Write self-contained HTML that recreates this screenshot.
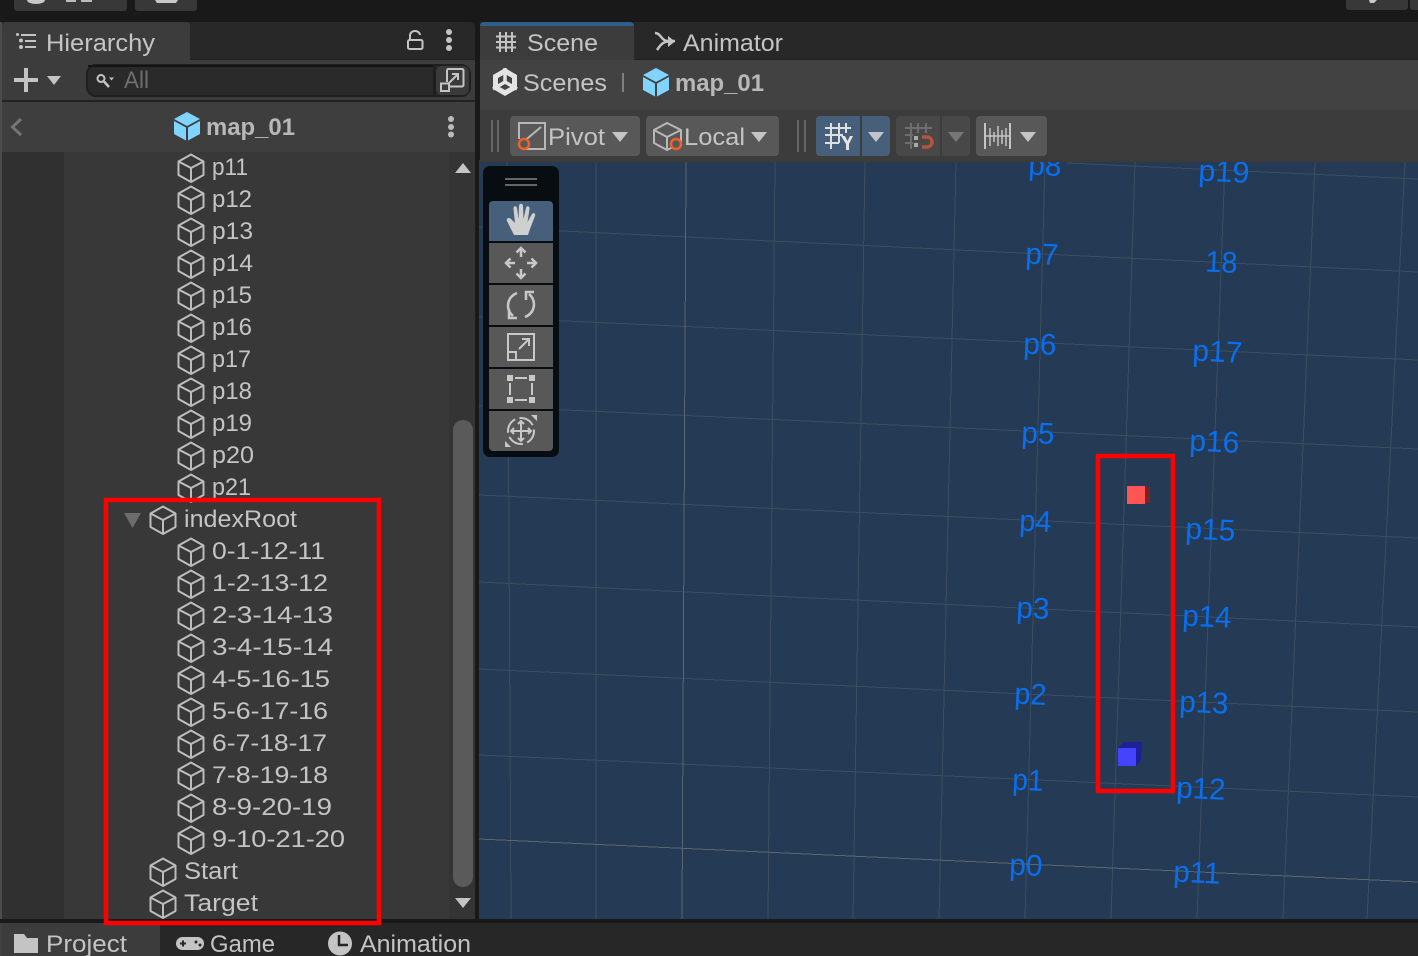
<!DOCTYPE html>
<html><head><meta charset="utf-8"><style>
html,body{margin:0;padding:0;background:#191919;width:1418px;height:956px;overflow:hidden}
svg{display:block;position:absolute;left:0;top:0}
text{font-family:"Liberation Sans",sans-serif;font-size:24.5px;fill:#c4c4c4}
.b{font-weight:bold;fill:#b8b8b8}
.l{fill:#0a6fee;font-size:30px}
.ic{fill:none;stroke:#c4c4c4;stroke-width:2}
</style></head><body>
<svg width="1418" height="956" viewBox="0 0 1418 956" xmlns="http://www.w3.org/2000/svg">
<defs>
<g id="cube" fill="none" stroke="#bdbdbd" stroke-width="2" stroke-linejoin="round">
<path d="M0-13.5 12.5-6.5V7L0 14-12.5 7V-6.5Z"/><path d="M-12.5-6.5 0 0 12.5-6.5M0 0V14"/>
</g>
<g id="bcube">
<path d="M0-14 13-7 0 0-13-7Z" fill="#80d4ff"/>
<path d="M-13-5 -1 1.500V14.500L-13 8Z" fill="#80d4ff"/><path d="M13-5 1 1.500V14.500L13 8Z" fill="#80d4ff"/>
</g>
<path id="caret" d="M-8-5H8L0 5Z"/>
</defs>

<rect width="1418" height="956" fill="#191919"/>
<!-- top bar buttons -->
<rect x="14" y="-6" width="113" height="17" rx="3" fill="#383838"/>
<rect x="135" y="-6" width="62" height="17" rx="3" fill="#383838"/>
<path d="M27 0a9 4 0 0 0 18 0Z" fill="#c8c8c8"/><rect x="66" y="0" width="10" height="2" fill="#bbb"/><rect x="81" y="0" width="11" height="2" fill="#bbb"/>
<path d="M155 0h23l-2 3h-19Z" fill="#c8c8c8"/>
<rect x="1346" y="-6" width="62" height="16" rx="3" fill="#383838"/><rect x="1410" y="-6" width="12" height="16" rx="3" fill="#383838"/>
<path d="M1369 0h8l-3 3h-4Z" fill="#c8c8c8"/>

<!-- Hierarchy panel -->
<rect x="0" y="22" width="2" height="897" fill="#4c4c4c"/>
<path d="M2 22H470a5 5 0 0 1 5 5V60H2Z" fill="#282828"/>
<path d="M2 26a4 4 0 0 1 4-4H186a4 4 0 0 1 4 4V60H2Z" fill="#3c3c3c"/>
<rect x="2" y="60" width="473" height="41" fill="#3c3c3c"/>
<rect x="190" y="59" width="285" height="1" fill="#222"/>
<rect x="2" y="100" width="473" height="2" fill="#222"/>
<rect x="2" y="102" width="473" height="50" fill="#3e3e3e"/>
<rect x="2" y="152" width="473" height="767" fill="#383838"/>
<rect x="2" y="152" width="62" height="767" fill="#303030"/>
<rect x="449" y="152" width="26" height="767" fill="#343434"/>
<rect x="453" y="420" width="20" height="467" rx="10" fill="#5a5a5a"/>
<path d="M455 173H471L463 163Z" fill="#c4c4c4"/>
<path d="M455 898H471L463 908Z" fill="#c4c4c4"/>

<!-- hierarchy tab -->
<g fill="#c4c4c4"><circle cx="17.500" cy="34.500" r="1.500"/><circle cx="21" cy="40.500" r="2"/><circle cx="21" cy="47" r="2"/>
<rect x="21" y="34" width="15" height="2"/><rect x="25" y="40" width="11" height="2"/><rect x="25" y="46" width="11" height="2"/></g>
<text x="46" y="51" textLength="109" lengthAdjust="spacingAndGlyphs">Hierarchy</text>
<path d="M410 40V36a5 4.500 0 0 1 10-1" fill="none" stroke="#c4c4c4" stroke-width="2"/>
<rect x="408" y="40" width="14.500" height="9" rx="1.500" fill="none" stroke="#c4c4c4" stroke-width="2"/>
<g fill="#c4c4c4"><circle cx="449" cy="32" r="3"/><circle cx="449" cy="40" r="3"/><circle cx="449" cy="48" r="3"/></g>

<!-- toolbar -->
<rect x="14" y="78" width="24" height="4" fill="#c4c4c4"/><rect x="24" y="68" width="4" height="24" fill="#c4c4c4"/>
<path d="M47 76H61L54 85Z" fill="#c4c4c4"/>
<rect x="87" y="65" width="383" height="31" rx="9" fill="#2a2a2a" stroke="#1f1f1f" stroke-width="2"/>
<rect x="88" y="65" width="345" height="2" fill="#141414"/>
<rect x="436" y="66" width="33" height="29" rx="6" fill="#3a3a3a"/>
<rect x="433" y="66" width="3" height="29" fill="#1f1f1f"/>
<circle cx="101" cy="78.500" r="3.500" fill="none" stroke="#c4c4c4" stroke-width="2"/><path d="M104 81.500 109 87" stroke="#c4c4c4" stroke-width="2.500"/><path d="M109 77.500h5l-2.500 3Z" fill="#c4c4c4"/>
<text x="124" y="88" textLength="25" lengthAdjust="spacingAndGlyphs" style="fill:#6e6e6e">All</text>
<path d="M447 82V70.500a1.500 1.500 0 0 1 1.500-1.500H462a1.500 1.500 0 0 1 1.500 1.500V85a1.500 1.500 0 0 1-1.500 1.500H450" class="ic"/>
<rect x="441" y="83.500" width="8" height="7.500" class="ic"/>
<path d="M449 83 458 74M452 74h6v6" class="ic"/>

<!-- header -->
<path d="M21 119 12.500 127 21 135" fill="none" stroke="#747474" stroke-width="3"/>
<use href="#bcube" x="187" y="126"/>
<text class="b" x="206" y="135" textLength="89" lengthAdjust="spacingAndGlyphs">map_01</text>
<g fill="#bbb"><circle cx="451" cy="119" r="3"/><circle cx="451" cy="127" r="3"/><circle cx="451" cy="134.500" r="3"/></g>

<!-- tree -->
<use href="#cube" x="191" y="168"/><text x="212" y="175" textLength="36" lengthAdjust="spacingAndGlyphs">p11</text>
<use href="#cube" x="191" y="200"/><text x="212" y="207" textLength="40" lengthAdjust="spacingAndGlyphs">p12</text>
<use href="#cube" x="191" y="232"/><text x="212" y="239" textLength="41" lengthAdjust="spacingAndGlyphs">p13</text>
<use href="#cube" x="191" y="264"/><text x="212" y="271" textLength="41" lengthAdjust="spacingAndGlyphs">p14</text>
<use href="#cube" x="191" y="296"/><text x="212" y="303" textLength="40" lengthAdjust="spacingAndGlyphs">p15</text>
<use href="#cube" x="191" y="328"/><text x="212" y="335" textLength="40" lengthAdjust="spacingAndGlyphs">p16</text>
<use href="#cube" x="191" y="360"/><text x="212" y="367" textLength="39" lengthAdjust="spacingAndGlyphs">p17</text>
<use href="#cube" x="191" y="392"/><text x="212" y="399" textLength="40" lengthAdjust="spacingAndGlyphs">p18</text>
<use href="#cube" x="191" y="424"/><text x="212" y="431" textLength="40" lengthAdjust="spacingAndGlyphs">p19</text>
<use href="#cube" x="191" y="456"/><text x="212" y="463" textLength="42" lengthAdjust="spacingAndGlyphs">p20</text>
<use href="#cube" x="191" y="488"/><text x="212" y="495" textLength="39" lengthAdjust="spacingAndGlyphs">p21</text>
<path d="M124 513H141L132.500 528Z" fill="#6c6c6c"/>
<use href="#cube" x="163" y="520"/><text x="184" y="527" textLength="113" lengthAdjust="spacingAndGlyphs">indexRoot</text>
<use href="#cube" x="191" y="552"/><text x="212" y="559" textLength="113" lengthAdjust="spacingAndGlyphs">0-1-12-11</text>
<use href="#cube" x="191" y="584"/><text x="212" y="591" textLength="116" lengthAdjust="spacingAndGlyphs">1-2-13-12</text>
<use href="#cube" x="191" y="616"/><text x="212" y="623" textLength="121" lengthAdjust="spacingAndGlyphs">2-3-14-13</text>
<use href="#cube" x="191" y="648"/><text x="212" y="655" textLength="121" lengthAdjust="spacingAndGlyphs">3-4-15-14</text>
<use href="#cube" x="191" y="680"/><text x="212" y="687" textLength="118" lengthAdjust="spacingAndGlyphs">4-5-16-15</text>
<use href="#cube" x="191" y="712"/><text x="212" y="719" textLength="116" lengthAdjust="spacingAndGlyphs">5-6-17-16</text>
<use href="#cube" x="191" y="744"/><text x="212" y="751" textLength="115" lengthAdjust="spacingAndGlyphs">6-7-18-17</text>
<use href="#cube" x="191" y="776"/><text x="212" y="783" textLength="116" lengthAdjust="spacingAndGlyphs">7-8-19-18</text>
<use href="#cube" x="191" y="808"/><text x="212" y="815" textLength="120" lengthAdjust="spacingAndGlyphs">8-9-20-19</text>
<use href="#cube" x="191" y="840"/><text x="212" y="847" textLength="133" lengthAdjust="spacingAndGlyphs">9-10-21-20</text>
<use href="#cube" x="163" y="872"/><text x="184" y="879" textLength="54" lengthAdjust="spacingAndGlyphs">Start</text>
<use href="#cube" x="163" y="904"/><text x="184" y="911" textLength="74" lengthAdjust="spacingAndGlyphs">Target</text>

<!-- bottom tabs -->
<rect x="0" y="919" width="476" height="4" fill="#191919"/>
<rect x="2" y="923" width="1416" height="33" fill="#272727"/>
<rect x="0" y="923" width="2" height="33" fill="#404040"/>
<rect x="2" y="923" width="158" height="33" fill="#3c3c3c"/>
<path d="M14 953V934h10l3 4h11v15Z" fill="#c4c4c4"/>
<text x="46" y="952" textLength="81" lengthAdjust="spacingAndGlyphs">Project</text>
<rect x="176" y="937" width="28" height="13" rx="6.500" fill="#c4c4c4"/>
<g fill="#272727"><rect x="180" y="942.500" width="6" height="2"/><rect x="182" y="940.500" width="2" height="6"/><circle cx="196" cy="942" r="1.500"/><circle cx="200" cy="945" r="1.500"/></g>
<text x="210" y="952" textLength="65" lengthAdjust="spacingAndGlyphs">Game</text>
<circle cx="340" cy="943.500" r="12" fill="#c4c4c4"/>
<path d="M339 935V945H348" fill="none" stroke="#272727" stroke-width="2.500"/>
<text x="360" y="952" textLength="111" lengthAdjust="spacingAndGlyphs">Animation</text>

<!-- Scene panel -->
<rect x="480" y="22" width="938" height="38" fill="#282828"/>
<path d="M480 60V26a4 4 0 0 1 4-4H630a4 4 0 0 1 4 4V60Z" fill="#3c3c3c"/>
<path d="M480 26a4 4 0 0 1 4-4H630a4 4 0 0 1 4 4Z" fill="#2d5f8c"/>
<rect x="634" y="59" width="784" height="1" fill="#222"/>
<rect x="480" y="60" width="938" height="50" fill="#424242"/>
<rect x="480" y="110" width="938" height="52" fill="#3c3c3c"/>
<path d="M500 32V52M506 32V52M512 32V52M496 36.500H516M496 42H516M496 47.500H516" stroke="#c4c4c4" stroke-width="2" fill="none"/>
<text x="527" y="51" textLength="71" lengthAdjust="spacingAndGlyphs">Scene</text>
<path d="M655 33C661 33 661 41 668 41H675M657 50C660 46 662 42 668 41.500" fill="none" stroke="#c4c4c4" stroke-width="2.500"/><path d="M668 36 675 41.500 668 47Z" fill="#c4c4c4"/>
<text x="683" y="51" textLength="100" lengthAdjust="spacingAndGlyphs">Animator</text>

<!-- breadcrumb -->
<path d="M505 68 517 75V89L505 96 493 89V75Z" fill="#e4e4e4"/>
<path d="M505 74 512 78V86L505 90 498 86V78Z" fill="#424242"/>
<path d="M505 82V68M505 82 517 89M505 82 493 89" stroke="#e4e4e4" stroke-width="3.500"/>
<text x="523" y="91" textLength="84" lengthAdjust="spacingAndGlyphs">Scenes</text>
<rect x="622" y="73" width="2" height="19" fill="#808080"/>
<use href="#bcube" x="656" y="82"/>
<text class="b" x="675" y="91" textLength="89" lengthAdjust="spacingAndGlyphs">map_01</text>

<!-- scene tools row -->
<rect x="491" y="120" width="2" height="32" fill="#666"/><rect x="497" y="120" width="2" height="32" fill="#666"/>
<rect x="510" y="116" width="130" height="40" rx="4" fill="#585858"/>
<rect x="646" y="116" width="133" height="40" rx="4" fill="#585858"/>
<rect x="797" y="120" width="2" height="32" fill="#666"/><rect x="804" y="120" width="2" height="32" fill="#666"/>
<path d="M816 120a4 4 0 0 1 4-4H860V156H820a4 4 0 0 1-4-4Z" fill="#46607c"/>
<path d="M862 116H886a4 4 0 0 1 4 4V152a4 4 0 0 1-4 4H862Z" fill="#46607c"/>
<path d="M896 120a4 4 0 0 1 4-4H940V156H900a4 4 0 0 1-4-4Z" fill="#484848"/>
<path d="M942 116H966a4 4 0 0 1 4 4V152a4 4 0 0 1-4 4H942Z" fill="#484848"/>
<rect x="976" y="116" width="71" height="40" rx="4" fill="#585858"/>

<path d="M523 123H545V149H523M519 139V123H523M522 143 541 127" fill="none" stroke="#b8b8b8" stroke-width="2"/>
<circle cx="524" cy="144" r="5" fill="#585858" stroke="#f0602a" stroke-width="2.500"/>
<text x="548" y="145" textLength="57" lengthAdjust="spacingAndGlyphs">Pivot</text>
<use href="#caret" x="620" y="137" fill="#c4c4c4"/>
<g fill="none" stroke="#b8b8b8" stroke-width="2" stroke-linejoin="round"><path d="M667 123 681 130V143L667 150 654 143V130Z"/><path d="M654 130 667 137 681 130M667 137V150"/></g>
<circle cx="676" cy="144" r="5" fill="#585858" stroke="#f0602a" stroke-width="2.500"/>
<text x="684" y="145" textLength="61" lengthAdjust="spacingAndGlyphs">Local</text>
<use href="#caret" x="759" y="137" fill="#c4c4c4"/>

<path d="M831 123V149M839 123V143M846 123V133M825 128H851M825 135H843M825 143H839" stroke="#e0e0e0" stroke-width="2" fill="none"/>
<path d="M841 136H845L847.500 141 850 136H853L849 144V150H846V144Z" fill="#e4e4e4"/>
<use href="#caret" x="876" y="137" fill="#c4c4c4"/>
<path d="M911 123V149M918 123V133M926 123V133M905 128H932M905 135H913M905 143H913" stroke="#6e6e6e" stroke-width="2" fill="none"/>
<rect x="914" y="136" width="4" height="4" fill="#aaa"/><rect x="914" y="143" width="4" height="4" fill="#aaa"/>
<path d="M922 137H927a5 5 0 0 1 0 10H922" fill="none" stroke="#b0563a" stroke-width="3.500"/>
<use href="#caret" x="956" y="137" fill="#777"/>
<path d="M985 123V149M1010 123V149" stroke="#c4c4c4" stroke-width="2"/>
<path d="M990 128V146M994 132V142M998 126V146M1002 130V144M1006 128V146M985 136H1010" stroke="#c4c4c4" stroke-width="1.500"/>
<use href="#caret" x="1028" y="137" fill="#c4c4c4"/>

<!-- scene -->
<svg x="479" y="162" width="939" height="757" viewBox="479 162 939 757">
<rect x="479" y="162" width="939" height="757" fill="#253a54"/>
<g stroke="#3c4d61" stroke-width="1" shape-rendering="crispEdges" fill="none">
<path d="M507 162 511 919M596 162V919M775 162 768 919M865 162 853 919M956 162 939 919M1045 162 1025 919M1135 162 1111 919M1225 162 1197 919M1315 162 1283 919M1405 162 1367 919"/>
<path d="M1067 163 1418 179M479 227 1418 272M479 317 1418 360M479 406 1418 449M479 495 1418 538M479 582 1418 627M479 669 1418 712M479 755 1418 797"/>
</g>
<g stroke="#596673" stroke-width="1" shape-rendering="crispEdges" fill="none">
<path d="M686 162 682 919M479 839 1418 882"/>
</g>
<g transform="translate(-1,-0.500)">
<text class="l" x="1029" y="175" textLength="33" lengthAdjust="spacingAndGlyphs" transform="rotate(2.700 1029 175)">p8</text>
<text class="l" x="1199" y="181" textLength="51" lengthAdjust="spacingAndGlyphs" transform="rotate(2.700 1199 181)">p19</text>
<text class="l" x="1026" y="264" textLength="33" lengthAdjust="spacingAndGlyphs" transform="rotate(2.700 1026 264)">p7</text>
<text class="l" x="1206" y="272" textLength="32" lengthAdjust="spacingAndGlyphs" transform="rotate(2.700 1206 272)">18</text>
<text class="l" x="1024" y="354" textLength="33" lengthAdjust="spacingAndGlyphs" transform="rotate(2.700 1024 354)">p6</text>
<text class="l" x="1193" y="361" textLength="50" lengthAdjust="spacingAndGlyphs" transform="rotate(2.700 1193 361)">p17</text>
<text class="l" x="1022" y="443" textLength="33" lengthAdjust="spacingAndGlyphs" transform="rotate(2.700 1022 443)">p5</text>
<text class="l" x="1190" y="451" textLength="50" lengthAdjust="spacingAndGlyphs" transform="rotate(2.700 1190 451)">p16</text>
<text class="l" x="1020" y="531" textLength="32" lengthAdjust="spacingAndGlyphs" transform="rotate(2.700 1020 531)">p4</text>
<text class="l" x="1186" y="539" textLength="50" lengthAdjust="spacingAndGlyphs" transform="rotate(2.700 1186 539)">p15</text>
<text class="l" x="1017" y="618" textLength="33" lengthAdjust="spacingAndGlyphs" transform="rotate(2.700 1017 618)">p3</text>
<text class="l" x="1183" y="626" textLength="49" lengthAdjust="spacingAndGlyphs" transform="rotate(2.700 1183 626)">p14</text>
<text class="l" x="1015" y="704" textLength="32" lengthAdjust="spacingAndGlyphs" transform="rotate(2.700 1015 704)">p2</text>
<text class="l" x="1180" y="712" textLength="49" lengthAdjust="spacingAndGlyphs" transform="rotate(2.700 1180 712)">p13</text>
<text class="l" x="1013" y="790" textLength="31" lengthAdjust="spacingAndGlyphs" transform="rotate(2.700 1013 790)">p1</text>
<text class="l" x="1177" y="798" textLength="49" lengthAdjust="spacingAndGlyphs" transform="rotate(2.700 1177 798)">p12</text>
<text class="l" x="1010" y="875" textLength="33" lengthAdjust="spacingAndGlyphs" transform="rotate(2.700 1010 875)">p0</text>
<text class="l" x="1174" y="882" textLength="47" lengthAdjust="spacingAndGlyphs" transform="rotate(2.700 1174 882)">p11</text>
</g>
<!-- red cube -->
<rect x="1145" y="487" width="5" height="16" fill="#7d2222"/>
<rect x="1127" y="486" width="18" height="18" fill="#ff5555"/>
<!-- blue cube -->
<path d="M1118 748 1124 742H1142L1141 760 1136 766V748Z" fill="#1f1f99"/>
<rect x="1118" y="748" width="18" height="18" fill="#4444ff"/>
<rect x="1098" y="456" width="75" height="335" fill="none" stroke="#fe0000" stroke-width="4.500"/>
</svg>
<rect x="479" y="160" width="939" height="2" fill="#3f3a3a"/>
<rect x="476" y="22" width="3" height="900" fill="#191919"/>
<rect x="479" y="919" width="939" height="4" fill="#191919"/>

<!-- tool overlay -->
<rect x="483" y="166" width="76" height="291" rx="7" fill="#080d11"/>
<rect x="505" y="178" width="32" height="2" fill="#666"/><rect x="505" y="184" width="32" height="2" fill="#666"/>
<path d="M489 205a4 4 0 0 1 4-4H549a4 4 0 0 1 4 4V241H489Z" fill="#46607c"/>
<rect x="489" y="243" width="64" height="40" fill="#585858"/>
<rect x="489" y="285" width="64" height="40" fill="#585858"/>
<rect x="489" y="327" width="64" height="40" fill="#585858"/>
<rect x="489" y="369" width="64" height="40" fill="#585858"/>
<path d="M489 411H553V447a4 4 0 0 1-4 4H493a4 4 0 0 1-4-4Z" fill="#585858"/>
<!-- hand -->
<path d="M514 235 507 221C506 218 509 217 511 219L515 223 513.500 209C513 206 516.500 205 517 208L518.500 219 519 206C519 203 523 203 523 206L523.500 219 526 208C526.500 205 530 206 529.500 209L527.500 222 532 214C533.500 212 536 213.500 535 216L530 229 528 235Z" fill="#d0d0d0"/>
<!-- move -->
<g fill="none" stroke="#c8c8c8" stroke-width="2.500"><path d="M521 248V257M521 269V278M506 263H515M527 263H536"/><path d="M516.500 252.500 521 248 525.500 252.500M516.500 273.500 521 278 525.500 273.500M510.500 258.500 506 263 510.500 267.500M531.500 258.500 536 263 531.500 267.500"/></g>
<!-- rotate -->
<g fill="none" stroke="#c8c8c8" stroke-width="2.500"><path d="M513 316C505 309 507 297 517 293M529 294C537 301 535 313 525 317"/><path d="M509 309V318H517M534 292H526V300" /></g>
<!-- scale -->
<g fill="none" stroke="#c8c8c8" stroke-width="2"><rect x="508" y="334" width="26" height="26"/><rect x="508" y="352" width="8" height="8"/><path d="M519 349 529 339M522 339H529V346"/></g>
<!-- rect -->
<g fill="#c8c8c8"><rect x="507" y="375" width="6" height="6"/><rect x="529" y="375" width="6" height="6"/><rect x="507" y="397" width="6" height="6"/><rect x="529" y="397" width="6" height="6"/><rect x="515" y="377" width="12" height="2"/><rect x="515" y="399" width="12" height="2"/><rect x="509" y="383" width="2" height="12"/><rect x="531" y="383" width="2" height="12"/></g>
<!-- transform -->
<g fill="none" stroke="#c8c8c8" stroke-width="2"><circle cx="521" cy="431" r="13" stroke-dasharray="16 4.400" stroke-dashoffset="2"/><path d="M521 421V441M511 431H531M518 424 521 421 524 424M518 438 521 441 524 438M514 428 511 431 514 434M528 428 531 431 528 434"/></g>
<path d="M531 415H537V421ZM505 447H511L505 441Z" fill="#c8c8c8"/>

<!-- red rect hierarchy -->
<rect x="106" y="500" width="273" height="423" fill="none" stroke="#fe0000" stroke-width="4.500"/>
</svg>
</body></html>
